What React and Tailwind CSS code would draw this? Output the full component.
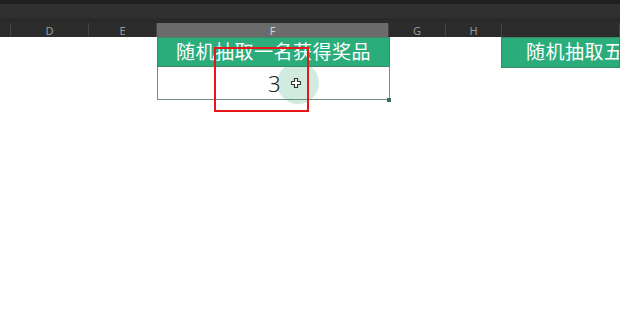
import React from 'react';

const cols = [
  { label: '', w: 11 },
  { label: 'D', w: 78 },
  { label: 'E', w: 68 },
  { label: 'F', w: 232, active: true },
  { label: 'G', w: 57 },
  { label: 'H', w: 56 },
  { label: '', w: 118 },
];

export default function App() {
  return (
    <div className="w-[620px] h-[309px] bg-white overflow-hidden relative" style={{ fontFamily: '"Noto Sans", "Noto Sans CJK SC", sans-serif' }}>
      {/* top chrome */}
      <div className="h-[4px] bg-[#1f1f1f]" />
      <div className="h-[14px] bg-[#303030]" />
      <div className="h-[5px] bg-[#2a2a2a]" />

      {/* column headers */}
      <div className="flex h-[14px] bg-[#2c2c2c]">
        {cols.map((c, i) => (
          <div
            key={i}
            className={`shrink-0 flex items-center justify-center text-[11px] leading-none border-r border-[#444] ${c.active ? 'bg-[#6b6b6b] text-[#d0d0d0]' : 'text-[#9a9a9a]'}`}
            style={{ width: c.w }}
          >
            {c.label}
          </div>
        ))}
      </div>

      {/* cursor highlight (behind cell text) */}
      <div className="absolute left-[277px] top-[62px] w-[42px] h-[42px] rounded-full bg-[#c6e6d7] opacity-80" />

      {/* cells */}
      <div className="flex relative">
        <div className="w-[157px] shrink-0" />
        <div className="w-[233px] shrink-0">
          <div className="h-[30px] bg-[#2bac7b] border border-[#3a8a68] flex items-center justify-center text-white text-[19px] leading-none tracking-[0.5px]">
            随机抽取一名获得奖品
          </div>
          <div className="h-[33px] border-x border-b border-[#6f8f84] flex items-center pl-[110px] text-[22px] font-light text-[#222] leading-none">
            3
          </div>
        </div>
        <div className="w-[111px] shrink-0" />
        <div className="flex-1 h-[31px] bg-[#2bac7b] border border-[#3a8a68] flex items-center pl-[24px] text-white text-[19px] leading-none whitespace-nowrap overflow-hidden tracking-[0.5px]">
          随机抽取五名获得奖品
        </div>
      </div>

      <svg className="absolute left-[291px] top-[78px]" width="10" height="10" viewBox="0 0 10 10">
        <path d="M3.5 0.5h3v3h3v3h-3v3h-3v-3h-3v-3h3z" fill="#fff" stroke="#333" strokeWidth="1.2" />
      </svg>
      {/* selection corner */}
      <div className="absolute left-[387px] top-[98px] w-[4px] h-[4px] bg-[#3b6e5b]" />
      {/* red box */}
      <div className="absolute left-[214px] top-[47px] w-[95px] h-[65px] border-2 border-[#e8161b]" />
    </div>
  );
}
